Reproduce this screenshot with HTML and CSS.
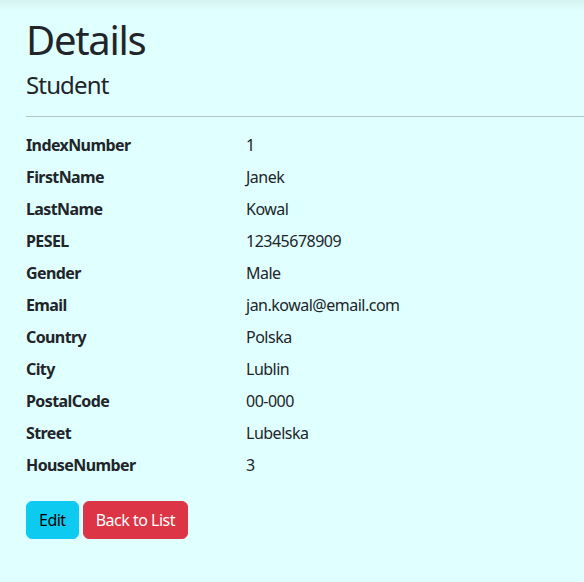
FILE: index.html
```html
<!DOCTYPE html>
<html lang="en">
<head>
<meta charset="utf-8">
<title>Details</title>
<link rel="stylesheet" href="styles.css">
</head>
<body>
<main class="page">
  <h1 class="title">Details</h1>
  <div class="details">
    <h4 class="subtitle">Student</h4>
    <hr class="divider">
    <dl class="fields">
      <dt>IndexNumber</dt><dd>1</dd>
      <dt>FirstName</dt><dd>Janek</dd>
      <dt>LastName</dt><dd>Kowal</dd>
      <dt>PESEL</dt><dd>12345678909</dd>
      <dt>Gender</dt><dd>Male</dd>
      <dt>Email</dt><dd>jan.kowal@email.com</dd>
      <dt>Country</dt><dd>Polska</dd>
      <dt>City</dt><dd>Lublin</dd>
      <dt>PostalCode</dt><dd>00-000</dd>
      <dt>Street</dt><dd>Lubelska</dd>
      <dt>HouseNumber</dt><dd>3</dd>
    </dl>
  </div>
  <div class="actions">
    <a class="btn btn-info" href="#">Edit</a>
    <a class="btn btn-danger" href="#">Back to List</a>
  </div>
</main>
</body>
</html>
```
FILE: styles.css
```css
html, body {
  margin: 0;
  padding: 0;
}
body {
  min-height: 582px;
  background: linear-gradient(to bottom, #d5f3f1 0, #e0ffff 11px) #e0ffff;
  color: #212529;
  font-family: "Noto Sans", "Open Sans", sans-serif;
  font-size: 16px;
  line-height: 1.5;
  letter-spacing: -0.5px;
}
.page {
  padding: 16px 0 0 26px;
}
.title {
  margin: 0 0 7px;
  font-size: 40px;
  font-weight: 400;
  line-height: 1.2;
  letter-spacing: -1.3px;
}
.subtitle {
  margin: 0 0 8px;
  font-size: 24px;
  font-weight: 400;
  line-height: 1.2;
  letter-spacing: -0.85px;
}
.divider {
  margin: 16px 0;
  border: 0;
  border-top: 1px solid #b3c5c5;
  height: 0;
}
.fields {
  display: grid;
  grid-template-columns: 220px 1fr;
  margin: 0 0 16px;
}
.fields dt {
  font-weight: 700;
  margin: 0 0 8px;
  letter-spacing: -0.6px;
}
.fields dd {
  margin: 0 0 8px;
}
.actions {
  display: flex;
  gap: 4px;
}
.btn {
  display: inline-block;
  padding: 6px 12px;
  font-size: 16px;
  line-height: 24px;
  border: 1px solid transparent;
  border-radius: 6px;
  text-decoration: none;
}
.btn-info {
  background: #0dcaf0;
  border-color: #0dcaf0;
  color: #000;
}
.btn-danger {
  background: #dc3545;
  border-color: #dc3545;
  color: #fff;
}
```
